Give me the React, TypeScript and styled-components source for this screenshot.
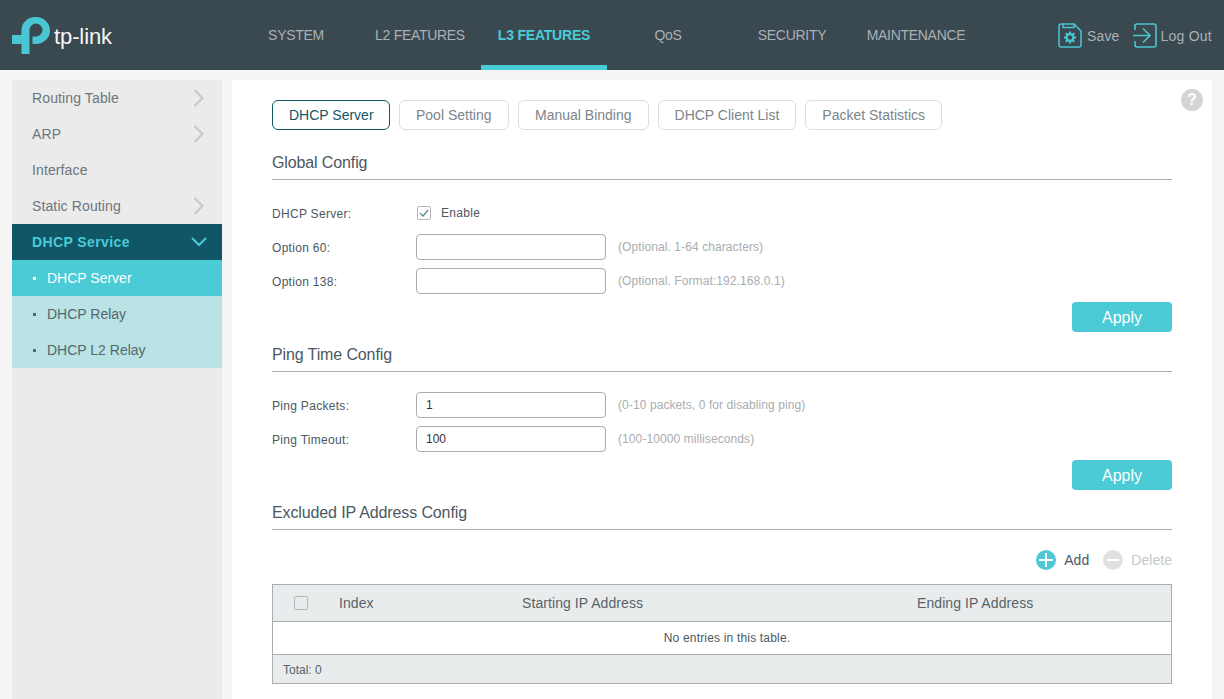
import React from 'react';
import styled, { createGlobalStyle } from 'styled-components';

const Global = createGlobalStyle`
  html, body { margin: 0; padding: 0; height: 100%; overflow: hidden; background: #f5f5f5; }
  body { font-family: "Liberation Sans", Arial, sans-serif; font-size: 14px; }
`;

const Page = styled.div`width: 1224px; height: 699px; display: flex; flex-direction: column; overflow: hidden;`;
const Header = styled.header`height: 70px; flex: none; background: #3a4850; display: flex; position: relative;`;
const LogoBox = styled.div`width: 234px; flex: none; display: flex; align-items: center; padding: 0 0 0 12px; box-sizing: border-box;`;
const LogoText = styled.span`font-size: 22px; line-height: 1; color: #f4f6f6; margin: 3px 0 0 4px; letter-spacing: -0.1px;`;
const Nav = styled.nav`display: flex;`;
const NavItem = styled.a<{ $active?: boolean }>`
  width: 124px; height: 70px; box-sizing: border-box; display: flex; align-items: center; justify-content: center;
  padding-top: 4px; font-size: 14px; letter-spacing: ${p => (p.$active ? '-0.2px' : '-0.3px')};
  color: ${p => (p.$active ? '#4acbd6' : '#a9b1b5')}; font-weight: ${p => (p.$active ? 700 : 400)};
  border-bottom: 5px solid ${p => (p.$active ? '#4acbd6' : 'transparent')};
  ${p => (p.$active ? 'margin: 0 -1px; width: 126px;' : '')}
`;
const Actions = styled.div`position: absolute; right: 12px; top: 23px; display: flex; gap: 14px; align-items: center;`;
const Action = styled.a`display: flex; align-items: center; gap: 5px; color: #a9b1b5; font-size: 14px; letter-spacing: 0.1px;`;
const LogOut = styled(Action)`gap: 3px; letter-spacing: 0.25px;`;

const Body = styled.div`flex: 1; display: flex; padding: 10px 12px 0; gap: 10px; min-height: 0;`;
const Side = styled.aside`width: 210px; flex: none; background: #ebebeb;`;
const SideItem = styled.div<{ $open?: boolean }>`
  height: 36px; display: flex; align-items: center; justify-content: space-between;
  padding: 0 ${p => (p.$open ? '15px' : '18px')} 0 20px;
  color: ${p => (p.$open ? '#4acbd6' : '#6d767c')}; background: ${p => (p.$open ? '#115666' : 'transparent')};
  font-weight: ${p => (p.$open ? 700 : 400)}; letter-spacing: ${p => (p.$open ? '0.4px' : '0.12px')};
`;
const SubItem = styled.div<{ $active?: boolean }>`
  height: 36px; display: flex; align-items: center; padding-left: 21px; gap: 11px;
  background: ${p => (p.$active ? '#4acbd6' : '#b9e3e4')}; color: ${p => (p.$active ? '#fff' : '#56666e')};
  &::before { content: ''; width: 3px; height: 3px; background: currentColor; }
`;

const Main = styled.main`flex: 1; background: #fff; padding: 20px 40px 0; position: relative; min-width: 0;`;
const Help = styled.div`position: absolute; right: 9px; top: 9px; width: 22px; height: 22px; border-radius: 50%; background: #d4d4d6; color: #fff; font-weight: 700; font-size: 16px; display: flex; align-items: center; justify-content: center;`;
const Tabs = styled.div`display: flex; gap: 9px; margin-bottom: 14px;`;
const Tab = styled.a<{ $active?: boolean }>`
  height: 30px; box-sizing: border-box; padding: 0 16px; display: flex; align-items: center; white-space: nowrap; border-radius: 6px; background: #fff;
  border: 1px solid ${p => (p.$active ? '#115666' : '#dcdedf')}; color: ${p => (p.$active ? '#115666' : '#7c858a')};
  &:nth-child(1) { width: 118px; }
  &:nth-child(2) { width: 110px; }
`;
const Section = styled.h2`margin: 0; font-size: 16px; font-weight: 400; letter-spacing: -0.12px; color: #4b585f; height: 36px; line-height: 22px; box-sizing: border-box; border-bottom: 1px solid #a9adaf; padding-top: 8px;`;
const Rows = styled.div`padding-top: 16px;`;
const Row = styled.div`height: 34px; display: flex; align-items: center; font-size: 12px; color: #4b585f;`;
const Label = styled.label`width: 144px; flex: none; margin-top: 2px; letter-spacing: 0.3px;`;
const Input = styled.input`
  width: 190px; height: 26px; box-sizing: border-box; border: 1px solid #a9adaf; border-radius: 4px; padding: 0 9px; font: 12px "Liberation Sans", Arial, sans-serif; color: #333; outline: none;
`;
const Hint = styled.span`margin-left: 12px; font-size: 12px; color: #a9adaf; letter-spacing: 0.09px;`;
const Check = styled.span`width: 14px; height: 14px; box-sizing: border-box; border: 1px solid #b4b8ba; border-radius: 2px; display: inline-flex; align-items: center; justify-content: center;`;
const RowCheck = styled(Check)`margin-left: 1px;`;
const Enable = styled.span`margin-left: 10px; letter-spacing: 0.3px;`;
const ApplyRow = styled.div`display: flex; justify-content: flex-end; height: 30px; margin: 4px 0;`;
const Apply = styled.button`width: 100px; height: 30px; border: 0; border-radius: 4px; background: #4acbd6; color: #fff; font: 16px "Liberation Sans", Arial, sans-serif; padding: 2px 0 0;`;
const Ops = styled.div`height: 38px; margin: 11px 0 5px; display: flex; justify-content: flex-end; align-items: center; gap: 14px;`;
const Op = styled.span<{ $disabled?: boolean }>`display: flex; align-items: center; gap: 8px; letter-spacing: 0.05px; color: ${p => (p.$disabled ? '#c4c8ca' : '#4b585f')};`;
const Table = styled.div`border: 1px solid #a9adaf; font-size: 14px; color: #56636a;`;
const THead = styled.div`height: 36px; background: #e9ecec; display: grid; grid-template-columns: 66px 183px 395px 1fr; align-items: center; border-bottom: 1px solid #a9adaf; letter-spacing: 0.08px;`;
const THCheck = styled.div`display: flex; padding-left: 21px;`;
const Empty = styled.div`height: 32px; display: flex; align-items: center; justify-content: center; padding-left: 10px; font-size: 12px; letter-spacing: 0.18px; color: #4b585f; border-bottom: 1px solid #a9adaf;`;
const Foot = styled.div`height: 28px; background: #e9ecec; display: flex; align-items: center; padding: 2px 0 0 10px; box-sizing: border-box; font-size: 12px;`;

const Chevron = ({ open }: { open?: boolean }) => (
  <svg width={open ? 16 : 11} height={open ? 10 : 18} viewBox={open ? '0 0 16 10' : '0 0 11 18'} fill="none" stroke={open ? '#4acbd6' : '#c4c6c8'} strokeWidth="2">
    <path d={open ? 'M1 1l7 7 7-7' : 'M1.5 1l8 8-8 8'} />
  </svg>
);

const Logo = () => (
  <svg width="38" height="37" viewBox="0 0 38 37">
    <path fill="#4ac6d2" d="M0 18H9.5V13A14 13 0 0 1 24 0A14 13.5 0 0 1 24 27H20.5V19.5H24A6.5 6.5 0 1 0 17.5 13V37H9.5V27H0Z" />
  </svg>
);

export default function App() {
  return (
    <Page>
      <Global />
      <Header>
        <LogoBox><Logo /><LogoText>tp-link</LogoText></LogoBox>
        <Nav>
          <NavItem>SYSTEM</NavItem>
          <NavItem>L2 FEATURES</NavItem>
          <NavItem $active>L3 FEATURES</NavItem>
          <NavItem>QoS</NavItem>
          <NavItem>SECURITY</NavItem>
          <NavItem>MAINTENANCE</NavItem>
        </Nav>
        <Actions>
          <Action>
            <svg width="24" height="25" viewBox="0 0 24 25" fill="none" stroke="#4ac6d2" strokeWidth="1.5">
              <path d="M3 1h13l7 7v14a2 2 0 0 1-2 2H3a2 2 0 0 1-2-2V3a2 2 0 0 1 2-2z" />
              <path d="M5 1v3.5h11V1" />
              <circle cx="12" cy="14.5" r="3.4" strokeWidth="2.2" />
              <path strokeWidth="2.2" d="M12 8.5v2M12 18.5v2M6 14.5h2M16 14.5h2M7.8 10.3l1.4 1.4M14.8 17.3l1.4 1.4M7.8 18.7l1.4-1.4M14.8 11.7l1.4-1.4" />
            </svg>
            Save
          </Action>
          <LogOut>
            <svg width="24" height="25" viewBox="0 0 24 25" fill="none" stroke="#4ac6d2" strokeWidth="1.6">
              <path d="M2 7V3a2 2 0 0 1 2-2h17a2 2 0 0 1 2 2v19a2 2 0 0 1-2 2H4a2 2 0 0 1-2-2v-4" />
              <path d="M0 12.5h16M10 5.5l7 7-7 7" />
            </svg>
            Log Out
          </LogOut>
        </Actions>
      </Header>
      <Body>
        <Side>
          <SideItem>Routing Table<Chevron /></SideItem>
          <SideItem>ARP<Chevron /></SideItem>
          <SideItem>Interface</SideItem>
          <SideItem>Static Routing<Chevron /></SideItem>
          <SideItem $open>DHCP Service<Chevron open /></SideItem>
          <SubItem $active>DHCP Server</SubItem>
          <SubItem>DHCP Relay</SubItem>
          <SubItem>DHCP L2 Relay</SubItem>
        </Side>
        <Main>
          <Help>?</Help>
          <Tabs>
            <Tab $active>DHCP Server</Tab>
            <Tab>Pool Setting</Tab>
            <Tab>Manual Binding</Tab>
            <Tab>DHCP Client List</Tab>
            <Tab>Packet Statistics</Tab>
          </Tabs>
          <Section>Global Config</Section>
          <Rows>
            <Row>
              <Label>DHCP Server:</Label>
              <RowCheck>
                <svg width="10" height="8" viewBox="0 0 10 8" fill="none" stroke="#5b8a96" strokeWidth="1.2"><path d="M1 4l3 3 5-6" /></svg>
              </RowCheck>
              <Enable>Enable</Enable>
            </Row>
            <Row><Label>Option 60:</Label><Input /><Hint>(Optional. 1-64 characters)</Hint></Row>
            <Row><Label>Option 138:</Label><Input /><Hint>(Optional. Format:192.168.0.1)</Hint></Row>
          </Rows>
          <ApplyRow><Apply>Apply</Apply></ApplyRow>
          <Section>Ping Time Config</Section>
          <Rows>
            <Row><Label>Ping Packets:</Label><Input defaultValue="1" /><Hint>(0-10 packets, 0 for disabling ping)</Hint></Row>
            <Row><Label>Ping Timeout:</Label><Input defaultValue="100" /><Hint>(100-10000 milliseconds)</Hint></Row>
          </Rows>
          <ApplyRow><Apply>Apply</Apply></ApplyRow>
          <Section>Excluded IP Address Config</Section>
          <Ops>
            <Op>
              <svg width="20" height="20" viewBox="0 0 20 20"><circle cx="10" cy="10" r="10" fill="#4fc8d4" /><path d="M10 3v14M3 10h14" stroke="#fff" strokeWidth="2" /></svg>
              Add
            </Op>
            <Op $disabled>
              <svg width="20" height="20" viewBox="0 0 20 20"><circle cx="10" cy="10" r="10" fill="#dfe1e2" /><path d="M4 10h12" stroke="#fff" strokeWidth="2" /></svg>
              Delete
            </Op>
          </Ops>
          <Table>
            <THead>
              <THCheck><Check /></THCheck>
              <span>Index</span>
              <span>Starting IP Address</span>
              <span>Ending IP Address</span>
            </THead>
            <Empty>No entries in this table.</Empty>
            <Foot>Total: 0</Foot>
          </Table>
        </Main>
      </Body>
    </Page>
  );
}
